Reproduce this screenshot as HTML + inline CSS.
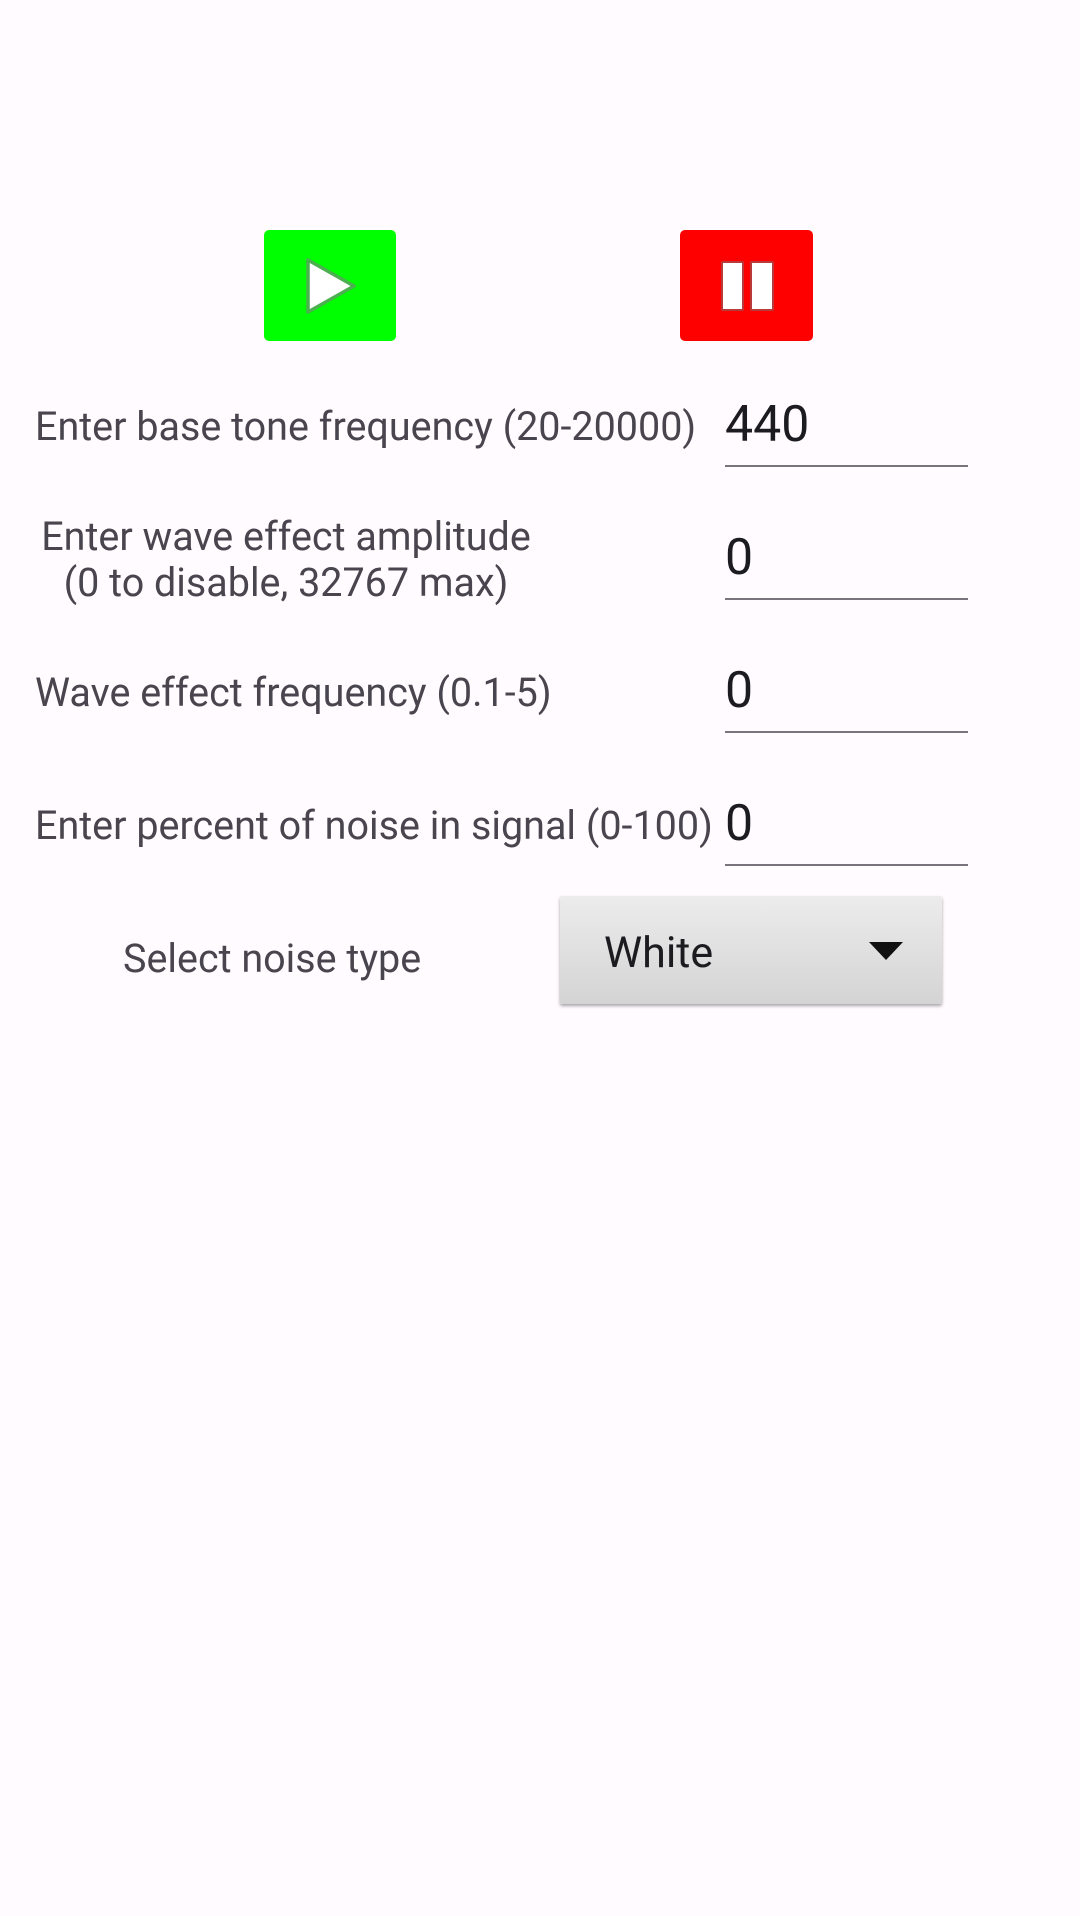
<!DOCTYPE html>
<html><head><meta charset="utf-8"><style>
html,body{margin:0;padding:0}
body{width:1080px;height:1916px;background:#fffbfe;position:relative;font-family:"Roboto","Liberation Sans",sans-serif;overflow:hidden}
.a{position:absolute}
.lbl{position:absolute;color:#49454f;font-size:39.5px;white-space:nowrap;line-height:46px;transform:translateY(-50%)}
.val{position:absolute;left:725px;color:#1c1b1f;font-size:50px;line-height:56px;transform:translateY(-50%)}
.ul{position:absolute;left:725px;width:243px;height:2px;background:#79747e}
</style></head><body>
<div class="a" style="left:264px;top:230px;width:132px;height:111px;background:#00ff00;border-radius:5px"></div>
<svg class="a" style="left:296px;top:250px" width="70" height="72"><polygon points="12,10 12,62 58,36" fill="#fff" stroke="#4caf50" stroke-width="3.5" stroke-linejoin="round"/></svg>
<div class="a" style="left:680px;top:230px;width:133px;height:111px;background:#ff0000;border-radius:5px"></div>
<div class="a" style="left:721px;top:261px;width:19px;height:46px;background:#fff;border:2px solid #b83a3a;border-radius:2px"></div>
<div class="a" style="left:750px;top:261px;width:20px;height:46px;background:#fff;border:2px solid #b83a3a;border-radius:2px"></div>

<div class="lbl" style="left:35px;top:427px">Enter base tone frequency (20-20000)</div>
<div class="val" style="top:425px">440</div>
<div class="ul" style="top:465px"></div>

<div class="lbl" style="left:35px;width:502px;text-align:center;top:560px">Enter wave effect amplitude<br>(0 to disable, 32767 max)</div>
<div class="val" style="top:558px">0</div>
<div class="ul" style="top:598px"></div>

<div class="lbl" style="left:35px;top:693px">Wave effect frequency (0.1-5)</div>
<div class="val" style="top:691px">0</div>
<div class="ul" style="top:731px"></div>

<div class="lbl" style="left:35px;top:826px">Enter percent of noise in signal (0-100)</div>
<div class="val" style="top:824px">0</div>
<div class="ul" style="top:864px"></div>

<div class="lbl" style="left:123px;top:959px">Select noise type</div>
<div class="a" style="left:560px;top:896px;width:382px;height:108px;background:linear-gradient(#ececec,#d4d4d4);box-shadow:0 2px 3px rgba(0,0,0,.35);border-radius:2px"></div>
<div class="a" style="left:604px;top:953px;transform:translateY(-50%);font-size:43px;color:#1c1b1f">White</div>
<svg class="a" style="left:869px;top:942px" width="34" height="18"><polygon points="0,0 34,0 17,18" fill="#111"/></svg>
</body></html>
